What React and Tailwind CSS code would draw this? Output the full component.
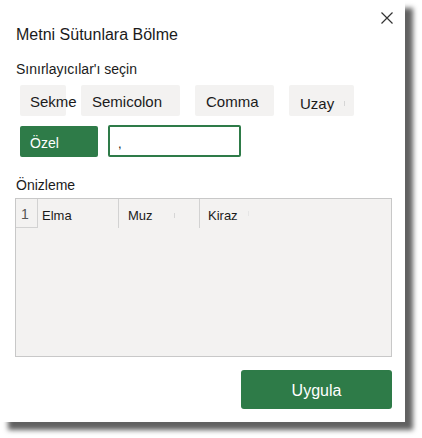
import React from "react";

const font = { fontFamily: '"Liberation Sans", Arial, sans-serif' };

function Tick({ className = "" }) {
  return <span className={"inline-block w-px h-[5px] bg-[#d6d6d6] " + className} />;
}

export default function App() {
  return (
    <div className="w-[422px] h-[438px] bg-white" style={font}>
      <div className="relative w-[405px] h-[422px] bg-white shadow-[8px_8px_5px_rgba(0,0,0,0.62)] flex flex-col text-[#1b1b1b]">
        <button className="absolute right-[11px] top-[11px] w-[14px] h-[14px] flex items-center justify-center">
          <svg width="14" height="14" viewBox="0 0 14 14">
            <path d="M1.5 1.5 L12.5 12.5 M12.5 1.5 L1.5 12.5" stroke="#333" strokeWidth="1.2" fill="none" />
          </svg>
        </button>

        <div className="ml-4 mt-[25px] text-[16px] leading-[20px]">Metni Sütunlara Bölme</div>
        <div className="ml-4 mt-[15px] text-[14px] leading-[18px]">Sınırlayıcılar'ı seçin</div>

        <div className="ml-5 mt-[7px] flex gap-[15px] text-[15px]">
          <div className="w-[46px] h-[31px] bg-[#f3f2f1] rounded-[2px] pl-[10px] pt-[8px] leading-[18px] whitespace-nowrap">Sekme</div>
          <div className="w-[99px] h-[31px] bg-[#f3f2f1] rounded-[2px] pl-[11px] pt-[8px] leading-[18px]">Semicolon</div>
          <div className="w-[79px] h-[31px] bg-[#f3f2f1] rounded-[2px] pl-[11px] pt-[8px] leading-[18px]">Comma</div>
          <div className="w-[65px] h-[31px] bg-[#f3f2f1] rounded-[2px] pl-[11px] pt-[10px] leading-[18px] flex items-start">
            <span>Uzay</span>
            <Tick className="ml-[10px] mt-[6px]" />
          </div>
        </div>

        <div className="ml-5 mt-[9px] flex items-start gap-[10px]">
          <div className="w-[78px] h-[31px] mt-px bg-[#2e7b48] rounded-[2px] text-white text-[14px] leading-[18px] pl-[10px] pt-[8px]">Özel</div>
          <div className="w-[133px] h-[32px] border-2 border-[#2e7b48] rounded-[2px] bg-white text-[13px] leading-[16px] pl-[8px] pt-[9px]">,</div>
        </div>

        <div className="ml-4 mt-[19px] text-[14px] leading-[18px]">Önizleme</div>

        <div className="ml-[15px] mt-[4px] w-[377px] h-[159px] border border-[#c8c8c8] bg-[#f3f2f1]">
          <div className="flex h-[29px] text-[13px] leading-[16px]">
            <div className="w-[22px] h-[29px] border-r border-b border-[#d2d2d2] text-[14px] text-[#555] pl-[5px] pt-[7px]">1</div>
            <div className="w-[81px] h-[29px] border-r border-[#d2d2d2] pl-[4px] pt-[9px]">Elma</div>
            <div className="w-[81px] h-[29px] border-r border-[#d2d2d2] pl-[9px] pt-[9px] flex items-start">
              <span>Muz</span>
              <Tick className="ml-[21px] mt-[5px]" />
            </div>
            <div className="flex-1 h-[29px] pl-[8px] pt-[9px] flex items-start">
              <span>Kiraz</span>
              <Tick className="ml-[10px] mt-[3px] bg-[#e6e6e6]" />
            </div>
          </div>
        </div>

        <div className="flex justify-end mr-[13px] mt-[13px]">
          <button className="w-[151px] h-[39px] bg-[#2e7b48] rounded-[3px] text-white text-[16px] leading-[20px] pt-[3px]" style={font}>
            Uygula
          </button>
        </div>
      </div>
    </div>
  );
}
